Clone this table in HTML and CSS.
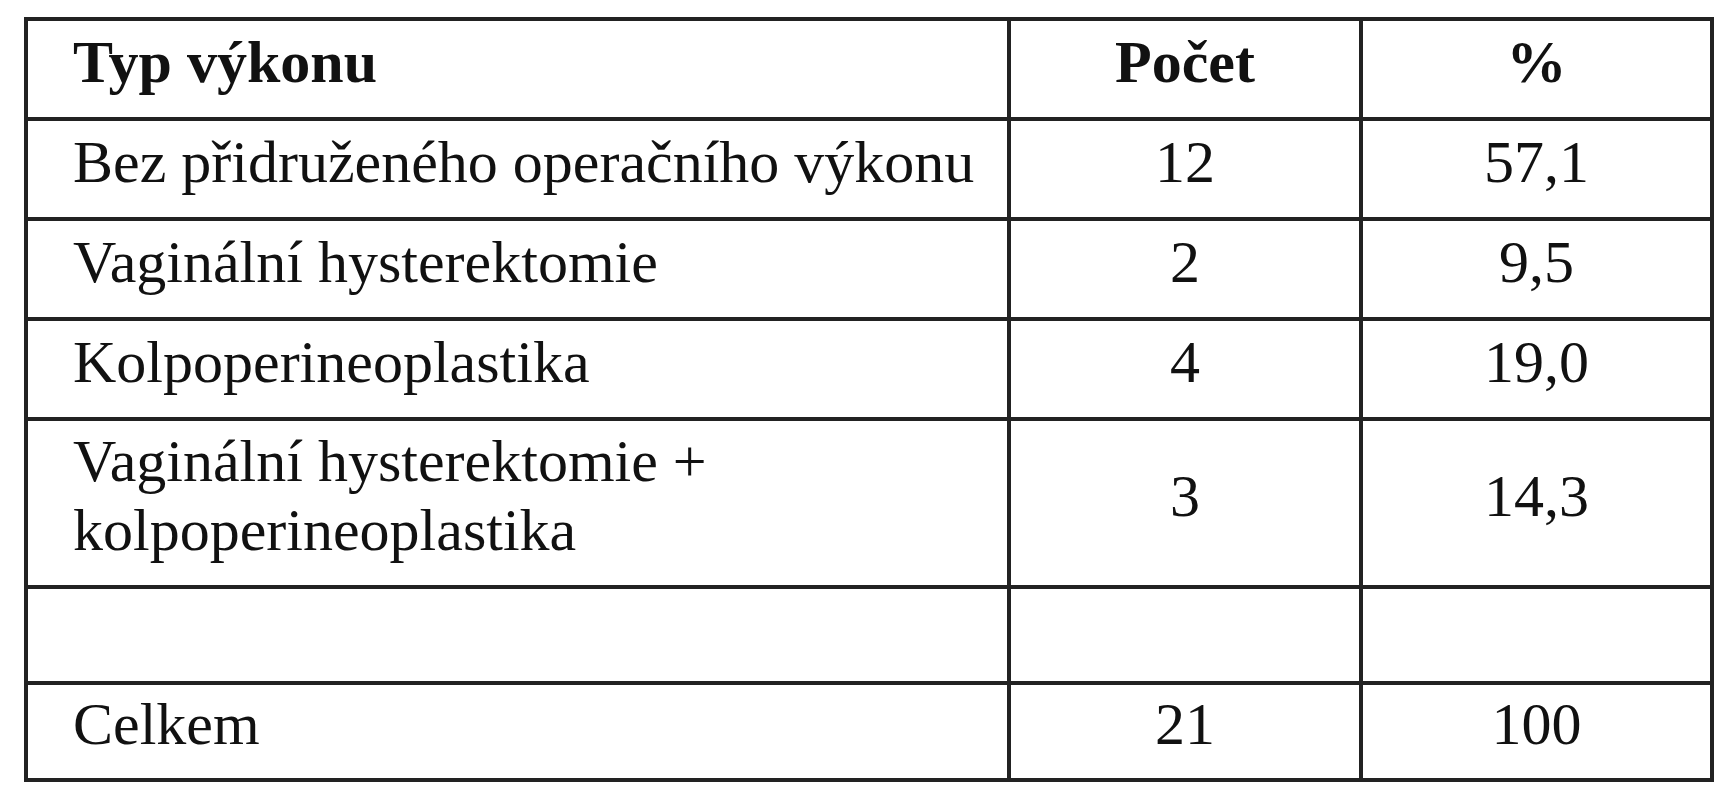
FILE: index.html
```html
<!DOCTYPE html>
<html lang="cs">
<head>
<meta charset="utf-8">
<title>Typ výkonu</title>
<link rel="stylesheet" href="styles.css">
</head>
<body>
<div class="table" role="table">
  <div class="cell head" role="columnheader">Typ výkonu</div>
  <div class="cell head num" role="columnheader">Počet</div>
  <div class="cell head num" role="columnheader">%</div>

  <div class="cell">Bez přidruženého operačního výkonu</div>
  <div class="cell num">12</div>
  <div class="cell num">57,1</div>

  <div class="cell">Vaginální hysterektomie</div>
  <div class="cell num">2</div>
  <div class="cell num">9,5</div>

  <div class="cell">Kolpoperineoplastika</div>
  <div class="cell num">4</div>
  <div class="cell num">19,0</div>

  <div class="cell">Vaginální hysterektomie +<br>kolpoperineoplastika</div>
  <div class="cell num">3</div>
  <div class="cell num">14,3</div>

  <div class="cell"></div>
  <div class="cell num"></div>
  <div class="cell num"></div>

  <div class="cell">Celkem</div>
  <div class="cell num">21</div>
  <div class="cell num">100</div>
</div>
</body>
</html>
```
FILE: styles.css
```css
html, body {
  margin: 0;
  padding: 0;
  background: #ffffff;
}

body {
  font-family: "Liberation Serif", "Times New Roman", serif;
  color: #111111;
}

.table {
  display: grid;
  grid-template-columns: 983px 352px 351px;
  grid-template-rows: 100px 100px 100px 100px 168px 96px 97px;
  width: max-content;
  margin: 17px 0 0 24px;
  border-left: 4px solid #222222;
  border-top: 4px solid #222222;
}

.cell {
  box-sizing: border-box;
  display: flex;
  flex-direction: column;
  justify-content: center;
  padding: 0 0 14px 45px;
  border-right: 4px solid #222222;
  border-bottom: 4px solid #222222;
  font-size: 60px;
  line-height: 69px;
  white-space: nowrap;
}

.num {
  align-items: center;
  text-align: center;
  padding-left: 0;
}

.head {
  font-weight: bold;
}
```
